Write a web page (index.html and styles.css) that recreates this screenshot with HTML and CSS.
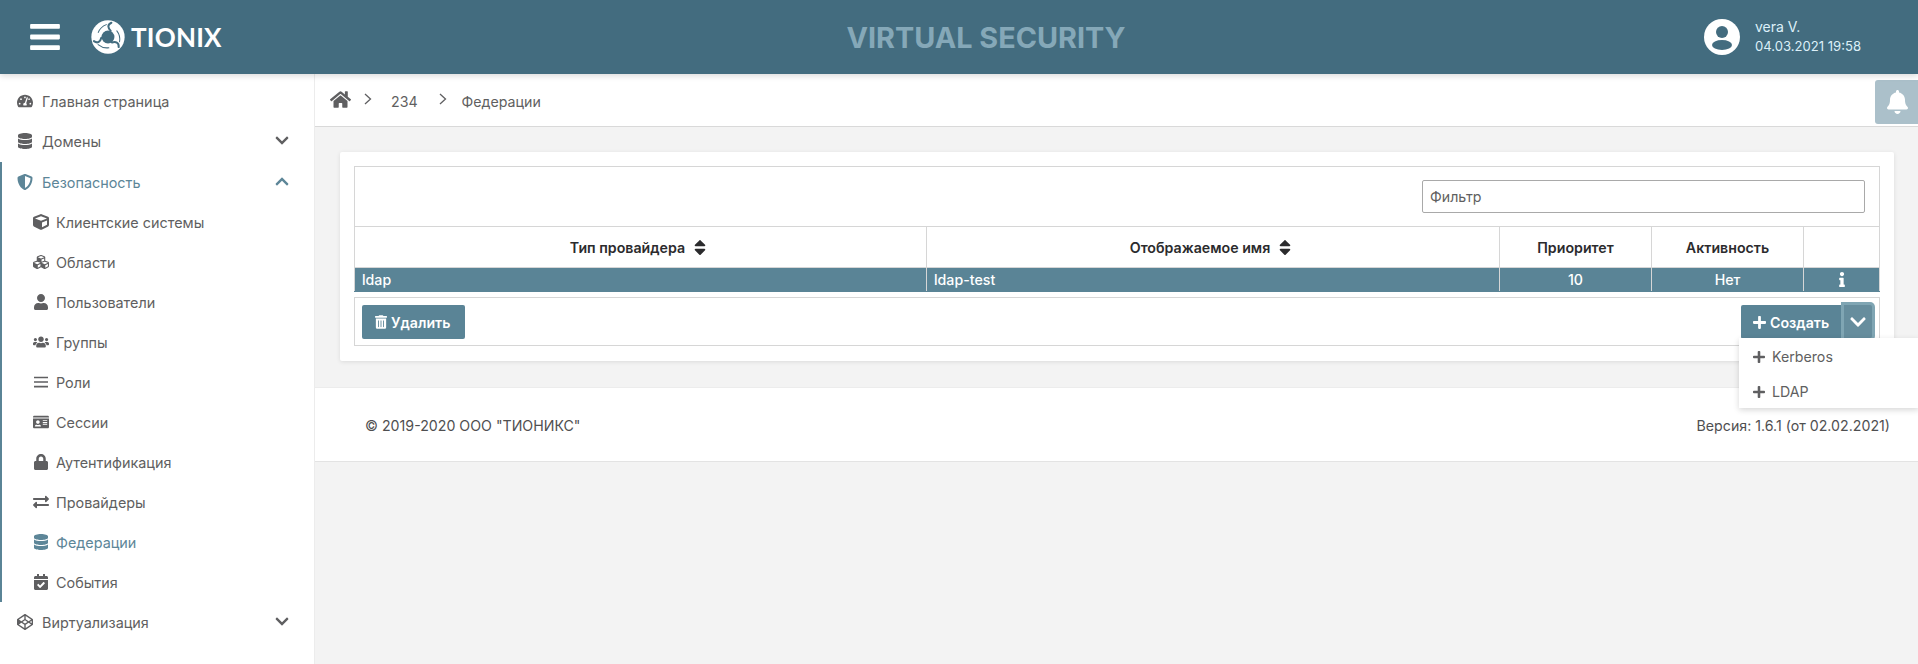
FILE: index.html
```html
<!DOCTYPE html>
<html lang="ru">
<head>
<meta charset="utf-8">
<title>Virtual Security</title>
<link rel="stylesheet" href="styles.css">
</head>
<body>
<svg class="sprite" aria-hidden="true">
  <symbol id="i-down" viewBox="0 0 448 512"><path d="M207.029 381.476L12.686 187.132c-9.373-9.373-9.373-24.569 0-33.941l22.667-22.667c9.357-9.357 24.522-9.375 33.901-.04L224 284.505l154.745-154.021c9.379-9.335 24.544-9.317 33.901.04l22.667 22.667c9.373 9.373 9.373 24.569 0 33.941L240.971 381.476c-9.373 9.372-24.569 9.372-33.942 0z"/></symbol>
  <symbol id="i-up" viewBox="0 0 448 512"><path d="M240.971 130.524l194.343 194.343c9.373 9.373 9.373 24.569 0 33.941l-22.667 22.667c-9.357 9.357-24.522 9.375-33.901.04L224 227.495 69.255 381.516c-9.379 9.335-24.544 9.317-33.901-.04l-22.667-22.667c-9.373-9.373-9.373-24.569 0-33.941L207.03 130.525c9.372-9.373 24.568-9.373 33.941-.001z"/></symbol>
  <symbol id="i-user" viewBox="0 0 448 512"><path d="M224 256c70.7 0 128-57.3 128-128S294.7 0 224 0 96 57.3 96 128s57.3 128 128 128zm89.6 32h-16.7c-22.2 10.2-46.9 16-72.9 16s-50.6-5.8-72.9-16h-16.7C60.2 288 0 348.2 0 422.4V464c0 26.5 21.5 48 48 48h352c26.5 0 48-21.5 48-48v-41.6c0-74.2-60.2-134.4-134.4-134.4z"/></symbol>
  <symbol id="i-db" viewBox="0 0 448 512"><path d="M448 73.143v45.714C448 159.143 347.667 192 224 192S0 159.143 0 118.857V73.143C0 32.857 100.333 0 224 0s224 32.857 224 73.143zM448 176v102.857C448 319.143 347.667 352 224 352S0 319.143 0 278.857V176c48.125 33.143 136.208 48.572 224 48.572S399.874 209.143 448 176zm0 160v102.857C448 479.143 347.667 512 224 512S0 479.143 0 438.857V336c48.125 33.143 136.208 48.572 224 48.572S399.874 369.143 448 336z"/></symbol>
  <symbol id="i-lock" viewBox="0 0 448 512"><path d="M400 224h-24v-72C376 68.2 307.8 0 224 0S72 68.2 72 152v72H48c-26.5 0-48 21.5-48 48v192c0 26.5 21.5 48 48 48h352c26.5 0 48-21.5 48-48V272c0-26.5-21.5-48-48-48zm-104 0H152v-72c0-39.7 32.3-72 72-72s72 32.3 72 72v72z"/></symbol>
  <symbol id="i-bell" viewBox="0 0 448 512"><path d="M224 512c35.32 0 63.97-28.65 63.97-64H160.03c0 35.35 28.65 64 63.97 64zm215.39-149.71c-19.32-20.76-55.47-51.99-55.47-154.29 0-77.7-54.48-139.9-127.94-155.16V32c0-17.67-14.32-32-31.98-32s-31.98 14.33-31.98 32v20.84C118.56 68.1 64.08 130.3 64.08 208c0 102.3-36.15 133.53-55.47 154.29-6 6.45-8.66 14.16-8.61 21.71.11 16.4 12.98 32 32.1 32h383.8c19.12 0 32-15.6 32.1-32 .05-7.55-2.61-15.27-8.61-21.71z"/></symbol>
  <symbol id="i-home" viewBox="0 0 576 512"><path d="M280.37 148.26L96 300.11V464a16 16 0 0 0 16 16l112.06-.29a16 16 0 0 0 15.92-16V368a16 16 0 0 1 16-16h64a16 16 0 0 1 16 16v95.64a16 16 0 0 0 16 16.05L464 480a16 16 0 0 0 16-16V300L295.67 148.26a12.19 12.19 0 0 0-15.3 0zM571.6 251.47L488 182.56V44.05a12 12 0 0 0-12-12h-56a12 12 0 0 0-12 12v72.61L318.47 43a48 48 0 0 0-61 0L4.34 251.47a12 12 0 0 0-1.6 16.9l25.5 31A12 12 0 0 0 45.15 301l235.22-193.74a12.19 12.19 0 0 1 15.3 0L530.9 301a12 12 0 0 0 16.9-1.6l25.5-31a12 12 0 0 0-1.7-16.93z"/></symbol>
  <symbol id="i-trash" viewBox="0 0 448 512"><path d="M32 464a48 48 0 0 0 48 48h288a48 48 0 0 0 48-48V128H32zm272-256a16 16 0 0 1 32 0v224a16 16 0 0 1-32 0zm-96 0a16 16 0 0 1 32 0v224a16 16 0 0 1-32 0zm-96 0a16 16 0 0 1 32 0v224a16 16 0 0 1-32 0zM432 32H312l-9.4-18.7A24 24 0 0 0 281.1 0H166.8a23.72 23.72 0 0 0-21.4 13.3L136 32H16A16 16 0 0 0 0 48v32a16 16 0 0 0 16 16h416a16 16 0 0 0 16-16V48a16 16 0 0 0-16-16z"/></symbol>
  <symbol id="i-plus" viewBox="0 0 448 512"><path d="M416 208H272V64c0-17.67-14.33-32-32-32h-32c-17.67 0-32 14.33-32 32v144H32c-17.67 0-32 14.33-32 32v32c0 17.67 14.33 32 32 32h144v144c0 17.67 14.33 32 32 32h32c17.67 0 32-14.33 32-32V304h144c17.67 0 32-14.33 32-32v-32c0-17.67-14.33-32-32-32z"/></symbol>
  <symbol id="i-info" viewBox="0 0 192 512"><path d="M20 424.229h20V279.771H20c-11.046 0-20-8.954-20-20V212c0-11.046 8.954-20 20-20h112c11.046 0 20 8.954 20 20v212.229h20c11.046 0 20 8.954 20 20V492c0 11.046-8.954 20-20 20H20c-11.046 0-20-8.954-20-20v-47.771c0-11.046 8.954-20 20-20zM96 0C56.235 0 24 32.235 24 72s32.235 72 72 72 72-32.235 72-72S135.764 0 96 0z"/></symbol>
  <symbol id="i-sort" viewBox="0 0 320 512"><path d="M41 288h238c21.4 0 32.1 25.9 17 41L177 448c-9.4 9.4-24.6 9.4-33.9 0L24 329c-15.1-15.1-4.4-41 17-41zm255-105L177 64c-9.4-9.4-24.6-9.4-33.9 0L24 183c-15.1 15.1-4.4 41 17 41h238c21.4 0 32.1-25.9 17-41z"/></symbol>
  <symbol id="i-bars" viewBox="0 0 448 512"><path d="M16 132h416c8.837 0 16-7.163 16-16V76c0-8.837-7.163-16-16-16H16C7.163 60 0 67.163 0 76v40c0 8.837 7.163 16 16 16zm0 160h416c8.837 0 16-7.163 16-16v-40c0-8.837-7.163-16-16-16H16c-8.837 0-16 7.163-16 16v40c0 8.837 7.163 16 16 16zm0 160h416c8.837 0 16-7.163 16-16v-40c0-8.837-7.163-16-16-16H16c-8.837 0-16 7.163-16 16v40c0 8.837 7.163 16 16 16z"/></symbol>
  <symbol id="i-users" viewBox="0 0 640 512"><path d="M96 224c35.3 0 64-28.7 64-64s-28.7-64-64-64-64 28.7-64 64 28.7 64 64 64zm448 0c35.3 0 64-28.7 64-64s-28.7-64-64-64-64 28.7-64 64 28.7 64 64 64zm32 32h-64c-17.6 0-33.5 7.1-45.1 18.6 40.3 22.1 68.9 62 75.1 109.4h66c17.7 0 32-14.3 32-32v-32c0-35.3-28.7-64-64-64zm-256 0c61.9 0 112-50.1 112-112S381.9 32 320 32 208 82.1 208 144s50.1 112 112 112zm76.8 32h-8.3c-20.8 10-43.9 16-68.5 16s-47.6-6-68.5-16h-8.3C179.6 288 128 339.6 128 403.2V432c0 26.5 21.5 48 48 48h288c26.5 0 48-21.5 48-48v-28.8c0-63.6-51.6-115.2-115.2-115.2zm-223.7-13.4C161.5 263.1 145.6 256 128 256H64c-35.3 0-64 28.7-64 64v32c0 17.7 14.3 32 32 32h65.9c6.3-47.4 34.9-87.3 75.2-109.4z"/></symbol>
  <symbol id="i-swap" viewBox="0 0 512 512"><path d="M0 168v-16c0-13.255 10.745-24 24-24h360V80c0-21.367 25.899-32.042 40.971-16.971l80 80c9.372 9.373 9.372 24.569 0 33.941l-80 80C409.956 271.982 384 261.456 384 240v-48H24c-13.255 0-24-10.745-24-24zm488 152H128v-48c0-21.314-25.862-32.08-40.971-16.971l-80 80c-9.372 9.373-9.372 24.569 0 33.941l80 80C102.057 463.997 128 453.437 128 432v-48h360c13.255 0 24-10.745 24-24v-16c0-13.255-10.745-24-24-24z"/></symbol>
  <symbol id="i-cube" viewBox="0 0 512 512"><path d="M239.1 6.3l-208 78c-18.7 7-31.1 25-31.1 45v225.1c0 18.2 10.3 34.8 26.5 42.9l208 104c13.5 6.8 29.4 6.8 42.9 0l208-104c16.3-8.1 26.5-24.8 26.5-42.9V129.3c0-20-12.4-37.9-31.1-44.9l-208-78C262 2.2 250 2.2 239.1 6.3zM256 68.4l192 72v1.1l-192 78-192-78v-1.1l192-72zm32 356V275.5l160-65v133.9l-160 80z"/></symbol>
  <symbol id="i-cubes" viewBox="0 0 512 512"><path d="M488.6 250.2L392 214V105.5c0-15-9.3-28.4-23.4-33.7l-100-37.5c-8.1-3.1-17.1-3.1-25.3 0l-100 37.5c-14.1 5.3-23.4 18.7-23.4 33.7V214l-96.6 36.2C9.3 255.5 0 268.9 0 283.9V394c0 13.6 7.7 26.1 19.9 32.2l100 50c10.1 5.1 22.1 5.1 32.2 0l103.9-52 103.9 52c10.1 5.1 22.1 5.1 32.2 0l100-50c12.2-6.1 19.9-18.6 19.9-32.2V283.9c0-15-9.3-28.4-23.4-33.7zM358 214.8l-85 31.9v-68.2l85-37v73.3zM154 104.1l102-38.2 102 38.2v.6l-102 41.4-102-41.4v-.6zm84 291.1l-85 42.5v-79.1l85-38.8v75.4zm0-112l-102 41.4-102-41.4v-.6l102-38.2 102 38.2v.6zm240 112l-85 42.5v-79.1l85-38.8v75.4zm0-112l-102 41.4-102-41.4v-.6l102-38.2 102 38.2v.6z"/></symbol>
  <symbol id="i-cal" viewBox="0 0 448 512"><path d="M436 160H12c-6.627 0-12-5.373-12-12v-36c0-26.51 21.49-48 48-48h48V12c0-6.627 5.373-12 12-12h40c6.627 0 12 5.373 12 12v52h128V12c0-6.627 5.373-12 12-12h40c6.627 0 12 5.373 12 12v52h48c26.51 0 48 21.49 48 48v36c0 6.627-5.373 12-12 12zM12 192h424c6.627 0 12 5.373 12 12v260c0 26.51-21.49 48-48 48H48c-26.51 0-48-21.49-48-48V204c0-6.627 5.373-12 12-12zm333.296 95.947l-28.169-28.398c-4.667-4.705-12.265-4.736-16.97-.068L194.12 364.665l-45.98-46.352c-4.667-4.705-12.266-4.736-16.971-.068l-28.397 28.17c-4.705 4.667-4.736 12.265-.068 16.97l82.601 83.269c4.667 4.705 12.265 4.736 16.97.068l142.953-141.805c4.705-4.667 4.736-12.265.068-16.97z"/></symbol>
  <symbol id="i-card" viewBox="0 0 576 512"><path d="M528 32H48C21.5 32 0 53.5 0 80v16h576V80c0-26.5-21.5-48-48-48zM0 432c0 26.5 21.5 48 48 48h480c26.5 0 48-21.5 48-48V128H0v304zm352-232c0-4.4 3.6-8 8-8h144c4.4 0 8 3.6 8 8v16c0 4.4-3.6 8-8 8H360c-4.4 0-8-3.6-8-8v-16zm0 64c0-4.4 3.6-8 8-8h144c4.4 0 8 3.6 8 8v16c0 4.4-3.6 8-8 8H360c-4.4 0-8-3.6-8-8v-16zm0 64c0-4.4 3.6-8 8-8h144c4.4 0 8 3.6 8 8v16c0 4.4-3.6 8-8 8H360c-4.4 0-8-3.6-8-8v-16zM176 192c35.3 0 64 28.7 64 64s-28.7 64-64 64-64-28.7-64-64 28.7-64 64-64zM67.1 396.2C75.5 370.5 99.6 352 128 352h8.2c12.3 5.1 25.7 8 39.8 8s27.6-2.9 39.8-8h8.2c28.4 0 52.5 18.5 60.9 44.2 3.2 9.9-5.2 19.8-15.6 19.8H82.7c-10.4 0-18.8-10-15.6-19.8z"/></symbol>
  <symbol id="i-gauge" viewBox="0 0 576 512"><path d="M288 32C128.94 32 0 160.94 0 320c0 52.8 14.25 102.26 39.06 144.8 5.61 9.62 16.3 15.2 27.44 15.2h443c11.14 0 21.83-5.58 27.44-15.2C561.75 422.26 576 372.8 576 320c0-159.06-128.94-288-288-288zm0 64c14.71 0 26.58 10.13 30.32 23.65-1.11 2.26-2.64 4.23-3.45 6.67l-9.22 27.67c-5.13 3.49-10.97 6.01-17.64 6.01-17.67 0-32-14.33-32-32S270.33 96 288 96zM96 384c-17.67 0-32-14.33-32-32s14.33-32 32-32 32 14.33 32 32-14.33 32-32 32zm48-160c-17.67 0-32-14.33-32-32s14.33-32 32-32 32 14.33 32 32-14.33 32-32 32zm246.77-72.41l-61.33 184C343.13 347.33 352 364.54 352 384c0 11.72-3.38 22.55-8.88 32H232.88c-5.5-9.45-8.88-20.28-8.88-32 0-33.94 26.5-61.43 59.9-63.59l61.34-184.01c4.17-12.56 17.73-19.45 30.36-15.17 12.57 4.19 19.35 17.79 15.17 30.36zm14.66 57.2l15.52-46.55c3.47-1.29 7.13-2.23 11.05-2.23 17.67 0 32 14.33 32 32s-14.33 32-32 32c-11.38-.01-20.89-6.28-26.57-15.22zM480 384c-17.67 0-32-14.33-32-32s14.33-32 32-32 32 14.33 32 32-14.33 32-32 32z"/></symbol>
  <symbol id="i-shield" viewBox="0 0 512 512"><path d="M466.5 83.7l-192-80a48.15 48.15 0 0 0-36.9 0l-192 80C27.7 91.1 16 108.6 16 128c0 198.5 114.5 335.7 221.5 380.3 11.8 4.9 25.1 4.9 36.9 0C360.1 472.6 496 349.3 496 128c0-19.4-11.7-36.9-29.5-44.3zM256.1 446.3l-.1-381 175.9 73.3c-3.3 151.4-82.1 261.1-175.8 307.7z"/></symbol>
  <symbol id="i-pen" viewBox="0 0 512 512"><path d="M502.285 159.704l-234-156c-7.987-4.915-16.511-4.96-24.571 0l-234 156C3.714 163.703 0 170.847 0 177.989v155.999c0 7.143 3.714 14.286 9.715 18.286l234 156.022c7.987 4.915 16.511 4.96 24.571 0l234-156.022c6-3.999 9.715-11.143 9.715-18.286V177.989c-.001-7.142-3.715-14.286-9.716-18.285zM278 63.131l172.286 114.858-76.857 51.429L278 165.703V63.131zm-44 0v102.572l-95.429 63.715-76.857-51.429L234 63.131zM44 219.132v73.715l55.143-36.857L44 219.132zm190 229.715L61.714 333.989l76.857-51.429L234 346.275v102.572zm22-140.858l-77.715-52 77.715-52 77.715 52-77.715 52zm22 140.858V346.275l95.429-63.715 76.857 51.429L278 448.847zm190-156l-55.143-36.857L468 219.132v73.715z"/></symbol>
  <symbol id="i-lines" viewBox="0 0 448 512"><path d="M0 84h448v50H0zM0 231h448v50H0zM0 378h448v50H0z"/></symbol>
  <symbol id="i-right" viewBox="0 0 10 16"><path d="M2 3 7.500 8 2 13" fill="none" stroke="currentColor" stroke-width="1.300"/></symbol>
</svg>

<header class="topbar">
  <div class="brand">
    <svg class="icon burger"><use href="#i-bars"/></svg>
    <svg class="logo-mark" viewBox="0 0 100 100">
      <circle class="logo-disc" cx="50" cy="50" r="49"/>
      <circle class="logo-hole" cx="50" cy="50" r="19"/>
      <path class="logo-slit" d="M58 32C50 24 47 14 60 8"/>
      <path class="logo-slit" d="M58 32C50 24 47 14 60 8" transform="rotate(120 50 50)"/>
      <path class="logo-slit" d="M58 32C50 24 47 14 60 8" transform="rotate(240 50 50)"/>
      <path class="logo-slit thin" d="M76 32C84 42 86 52 84 64"/>
      <path class="logo-slit thin" d="M76 32C84 42 86 52 84 64" transform="rotate(120 50 50)"/>
      <path class="logo-slit thin" d="M76 32C84 42 86 52 84 64" transform="rotate(240 50 50)"/>
    </svg>
    <span class="logo-text">TIONIX</span>
  </div>
  <div class="app-title">VIRTUAL SECURITY</div>
  <div class="account">
    <svg class="avatar" viewBox="0 0 36 36"><circle class="avatar-bg" cx="18" cy="18" r="18"/><circle class="avatar-fg" cx="18" cy="13" r="6"/><ellipse class="avatar-fg" cx="18" cy="26" rx="10" ry="5"/></svg>
    <div class="account-text">
      <div class="account-name">vera V.</div>
      <div class="account-date">04.03.2021 19:58</div>
    </div>
  </div>
</header>

<div class="shell">
  <aside class="sidebar">
    <a class="nav-item"><svg class="icon nav-icon"><use href="#i-gauge"/></svg><span>Главная страница</span></a>
    <a class="nav-item"><svg class="icon nav-icon"><use href="#i-db"/></svg><span>Домены</span><svg class="icon nav-caret"><use href="#i-down"/></svg></a>
    <div class="nav-group">
      <a class="nav-item is-active"><svg class="icon nav-icon"><use href="#i-shield"/></svg><span>Безопасность</span><svg class="icon nav-caret"><use href="#i-up"/></svg></a>
      <a class="nav-item sub"><svg class="icon nav-icon"><use href="#i-cube"/></svg><span>Клиентские системы</span></a>
      <a class="nav-item sub"><svg class="icon nav-icon"><use href="#i-cubes"/></svg><span>Области</span></a>
      <a class="nav-item sub"><svg class="icon nav-icon"><use href="#i-user"/></svg><span>Пользователи</span></a>
      <a class="nav-item sub"><svg class="icon nav-icon"><use href="#i-users"/></svg><span>Группы</span></a>
      <a class="nav-item sub"><svg class="icon nav-icon"><use href="#i-lines"/></svg><span>Роли</span></a>
      <a class="nav-item sub"><svg class="icon nav-icon"><use href="#i-card"/></svg><span>Сессии</span></a>
      <a class="nav-item sub"><svg class="icon nav-icon"><use href="#i-lock"/></svg><span>Аутентификация</span></a>
      <a class="nav-item sub"><svg class="icon nav-icon"><use href="#i-swap"/></svg><span>Провайдеры</span></a>
      <a class="nav-item sub is-active"><svg class="icon nav-icon"><use href="#i-db"/></svg><span>Федерации</span></a>
      <a class="nav-item sub"><svg class="icon nav-icon"><use href="#i-cal"/></svg><span>События</span></a>
    </div>
    <a class="nav-item"><svg class="icon nav-icon"><use href="#i-pen"/></svg><span>Виртуализация</span><svg class="icon nav-caret"><use href="#i-down"/></svg></a>
  </aside>

  <main class="main">
    <nav class="crumbs">
      <svg class="icon crumb-home"><use href="#i-home"/></svg>
      <svg class="crumb-sep"><use href="#i-right"/></svg>
      <span class="crumb">234</span>
      <svg class="crumb-sep"><use href="#i-right"/></svg>
      <span class="crumb">Федерации</span>
      <button class="bell"><svg class="icon"><use href="#i-bell"/></svg></button>
    </nav>

    <section class="card">
      <table class="grid">
        <colgroup><col class="c-a"><col class="c-b"><col class="c-c"><col class="c-d"><col class="c-e"></colgroup>
        <thead>
          <tr class="filter-row"><td colspan="5"><div class="filter-wrap"><input class="filter" type="text" placeholder="Фильтр"></div></td></tr>
          <tr class="head-row">
            <th>Тип провайдера<svg class="icon sort"><use href="#i-sort"/></svg></th>
            <th>Отображаемое имя<svg class="icon sort"><use href="#i-sort"/></svg></th>
            <th>Приоритет</th>
            <th>Активность</th>
            <th></th>
          </tr>
        </thead>
        <tbody>
          <tr class="data-row">
            <td>ldap</td>
            <td>ldap-test</td>
            <td class="center">10</td>
            <td class="center">Нет</td>
            <td class="center"><svg class="icon info"><use href="#i-info"/></svg></td>
          </tr>
        </tbody>
      </table>
      <div class="actions">
        <button class="btn btn-delete"><svg class="icon"><use href="#i-trash"/></svg>Удалить</button>
        <div class="split">
          <button class="btn btn-create"><svg class="icon"><use href="#i-plus"/></svg>Создать</button>
          <button class="btn btn-caret"><svg class="icon"><use href="#i-down"/></svg></button>
          <div class="menu">
            <a class="menu-item"><svg class="icon"><use href="#i-plus"/></svg>Kerberos</a>
            <a class="menu-item"><svg class="icon"><use href="#i-plus"/></svg>LDAP</a>
          </div>
        </div>
      </div>
    </section>

    <footer class="footer">
      <span>© 2019-2020 ООО "ТИОНИКС"</span>
      <span>Версия: 1.6.1 (от 02.02.2021)</span>
    </footer>
  </main>
</div>
</body>
</html>
```
FILE: styles.css
```css
* { box-sizing: border-box; }
html, body { height: 100%; }
body {
  margin: 0;
  overflow: hidden;
  background: #f3f3f3;
  font-family: Inter, "Liberation Sans", sans-serif;
  font-size: 14.2px;
  color: #5f5f61;
  display: flex;
  flex-direction: column;
}
.sprite { display: none; }
.icon { fill: currentColor; display: block; flex: none; }

.topbar {
  position: relative;
  z-index: 2;
  flex: none;
  height: 74px;
  background: #436c7f;
  box-shadow: 0 2px 6px rgba(0, 0, 0, .15);
  display: grid;
  grid-template-columns: 1fr auto 1fr;
  align-items: center;
}
.brand { display: flex; align-items: center; padding-left: 30px; }
.burger { width: 30px; height: 34px; color: #fff; margin-right: 31px; }
.logo-mark { width: 34px; height: 34px; margin-right: 6px; flex: none; }
.logo-disc { fill: #fff; }
.logo-hole { fill: #436c7f; }
.logo-slit { fill: none; stroke: #436c7f; stroke-width: 6; stroke-linecap: round; }
.logo-slit.thin { stroke-width: 3; }
.logo-text {
  font-family: Lato, sans-serif;
  font-weight: 700;
  font-size: 26px;
  letter-spacing: .2px;
  color: #fff;
}
.app-title {
  margin-left: 54px;
  font-weight: 700;
  font-size: 28.8px;
  color: #85a8b8;
}
.account { justify-self: end; display: flex; align-items: center; width: 214px; }
.avatar { width: 36px; height: 36px; margin-right: 15px; flex: none; }
.avatar-bg { fill: #fff; }
.avatar-fg { fill: #436c7f; }
.account-text { color: #dcf0f9; }
.account-name { font-size: 14px; line-height: 18px; }
.account-date { font-size: 13.1px; line-height: 20px; }

.shell { flex: 1; display: flex; min-height: 0; }
.sidebar {
  flex: none;
  width: 315px;
  background: #fff;
  border-right: 1px solid #ececec;
  padding-top: 7px;
  font-size: 14.4px;
}
.nav-item {
  display: flex;
  align-items: center;
  height: 40px;
  padding: 0 25px 0 17px;
  color: #5f5f61;
}
.nav-item > span { flex: 1; }
.nav-icon { width: 16px; height: 16px; margin-right: 9px; }
.nav-caret { width: 14px; height: 15px; position: relative; top: -1px; }
.nav-group { margin-top: 1px; border-left: 2px solid #5a8496; }
.nav-group .nav-item { padding-left: 15px; }
.nav-group .nav-item.sub { padding-left: 31px; }
.nav-group .nav-item.sub .nav-icon { margin-right: 7px; }
.nav-item.is-active { color: #5d8698; }

.main { flex: 1; min-width: 0; }
.crumbs {
  position: relative;
  height: 53px;
  background: #fff;
  border-bottom: 1px solid #d9d9d9;
  display: flex;
  align-items: center;
  padding: 3px 0 0 15px;
}
.crumb-home { width: 21px; height: 19px; margin-right: 12px; position: relative; top: -2px; }
.crumb-sep { width: 10px; height: 16px; margin-right: 18px; position: relative; top: -3px; }
.crumb { margin-right: 20px; }
.crumb + .crumb-sep { margin-right: 14px; }
.bell {
  position: absolute;
  right: 0;
  top: 6px;
  width: 43px;
  height: 44px;
  border: 0;
  padding: 0 0 0 12px;
  border-radius: 3px 0 0 3px;
  background: #abc0ca;
  color: #fff;
}
.bell .icon { width: 21px; height: 24px; }

.card {
  margin: 25px 24px 0 25px;
  padding: 14px 14px 15px;
  background: #fff;
  box-shadow: 0 1px 4px rgba(0, 0, 0, .1);
  border-radius: 2px;
}
.grid {
  width: 100%;
  table-layout: fixed;
  border-collapse: collapse;
  border: 1px solid #d6d6d6;
}
.c-a { width: 572px; }
.c-b { width: 573px; }
.c-c { width: 152px; }
.c-d { width: 152px; }
.grid td, .grid th { padding: 0 7px; border: 1px solid #d6d6d6; }
.filter-row td { height: 60px; border-bottom: 1px solid #d6d6d6; }
.filter-wrap { display: flex; justify-content: flex-end; padding-right: 7px; }
.filter {
  width: 443px;
  height: 33px;
  border: 1px solid #a9a9a9;
  border-radius: 2px;
  padding: 0 7px;
  font: 14.2px Inter, sans-serif;
  color: #5f5f61;
  outline: 0;
}
.filter::placeholder { color: #5f5f61; opacity: 1; }
.head-row th { height: 41px; text-align: center; font-size: 14.2px; font-weight: 600; color: #2b2b2d; }
.sort { display: inline-block; width: 12px; height: 19px; margin: 0 5px 0 9px; vertical-align: -4px; color: #2b2b2d; }
.data-row td {
  height: 24px;
  background: #5a8496;
  color: #fff;
  font-weight: 500;
  border-top-color: #5a8496;
  border-bottom-color: #5a8496;
}
.center { text-align: center; }
.info { display: inline-block; width: 8px; height: 15px; vertical-align: -2px; }

.actions {
  margin-top: 5px;
  height: 49px;
  border: 1px solid #d6d6d6;
  padding: 7px 3px 0 7px;
  display: flex;
  justify-content: space-between;
  align-items: flex-start;
}
.btn {
  height: 34px;
  border: 0;
  border-radius: 2px;
  background: #5a8496;
  color: #fff;
  font: 600 14.2px Inter, sans-serif;
  padding: 0 13px;
  display: flex;
  align-items: center;
  gap: 4px;
}
.btn .icon { width: 12px; height: 14px; }
.btn-delete { padding-right: 15px; }
.split { position: relative; display: flex; align-items: flex-start; }
.btn-create { width: 100px; border-radius: 2px 0 0 2px; padding: 0 12px; gap: 4px; }
.btn-create .icon { width: 13px; height: 15px; }
.btn-caret {
  width: 28px;
  height: 33px;
  margin: 0 4px 0 3px;
  padding: 0 0 0 6px;
  background: #668d9d;
  border-radius: 0 2px 2px 0;
  box-shadow: 0 0 0 3px #7fa5b3;
}
.btn-caret .icon { width: 16px; height: 18px; }
.menu {
  position: absolute;
  z-index: 3;
  left: -2px;
  top: 33px;
  width: 180px;
  height: 70px;
  padding-top: 1px;
  background: #fff;
  box-shadow: 0 2px 6px rgba(0, 0, 0, .16);
}
.menu-item {
  height: 35px;
  display: flex;
  align-items: center;
  padding-left: 14px;
  color: #5f5f61;
}
.menu-item .icon { width: 12px; height: 14px; margin-right: 7px; }

.footer {
  margin-top: 26px;
  height: 75px;
  background: #fff;
  border-top: 1px solid #ececec;
  border-bottom: 1px solid #e3e3e3;
  padding: 1px 28px 0 50px;
  display: flex;
  justify-content: space-between;
  align-items: center;
  color: #4f4f51;
}
```
